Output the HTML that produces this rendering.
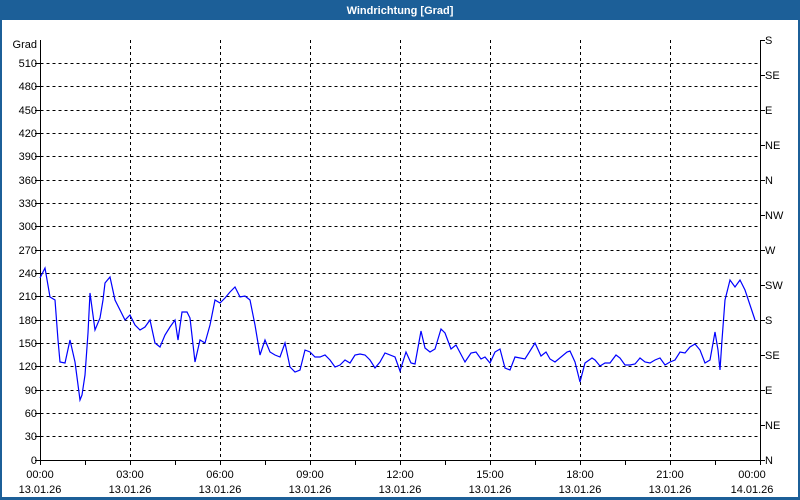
<!DOCTYPE html>
<html><head><meta charset="utf-8"><style>
html,body{margin:0;padding:0;width:800px;height:500px;overflow:hidden;background:#fff}
svg{display:block}
text{font-family:"Liberation Sans","DejaVu Sans",sans-serif;font-size:11px;fill:#000}
</style></head><body>
<svg width="800" height="500" xmlns="http://www.w3.org/2000/svg">
<rect x="0" y="0" width="800" height="500" fill="#1c5f98"/>
<rect x="2" y="20" width="796" height="477" fill="#fff"/>
<text x="400" y="14" text-anchor="middle" style="fill:#fff;font-weight:bold;font-size:11px">Windrichtung [Grad]</text>
<g stroke="#000" stroke-width="1" stroke-dasharray="3,3" fill="none">
<path d="M40.5 63.5H760M40.5 86.5H760M40.5 110.5H760M40.5 133.5H760M40.5 156.5H760M40.5 180.5H760M40.5 203.5H760M40.5 226.5H760M40.5 250.5H760M40.5 273.5H760M40.5 296.5H760M40.5 320.5H760M40.5 343.5H760M40.5 366.5H760M40.5 390.5H760M40.5 413.5H760M40.5 436.5H760"/>
<path d="M130.5 40V460M220.5 40V460M310.5 40V460M400.5 40V460M490.5 40V460M580.5 40V460M670.5 40V460"/>
</g>
<g stroke="#000" stroke-width="1" fill="none">
<path d="M40.5 40V460.5H760.5V40"/>
<path d="M35 63.5H40M35 86.5H40M35 110.5H40M35 133.5H40M35 156.5H40M35 180.5H40M35 203.5H40M35 226.5H40M35 250.5H40M35 273.5H40M35 296.5H40M35 320.5H40M35 343.5H40M35 366.5H40M35 390.5H40M35 413.5H40M35 436.5H40M35 460.5H40"/>
<path d="M760 40.5H765M760 75.5H765M760 110.5H765M760 145.5H765M760 180.5H765M760 215.5H765M760 250.5H765M760 285.5H765M760 320.5H765M760 355.5H765M760 390.5H765M760 425.5H765M760 460.5H765"/>
<path d="M40.5 460V465M85.5 460V465M130.5 460V465M175.5 460V465M220.5 460V465M265.5 460V465M310.5 460V465M355.5 460V465M400.5 460V465M445.5 460V465M490.5 460V465M535.5 460V465M580.5 460V465M625.5 460V465M670.5 460V465M715.5 460V465M760.5 460V465"/>
</g>
<g text-anchor="end">
<text x="37" y="48">Grad</text>
<text x="37" y="67">510</text><text x="37" y="90">480</text><text x="37" y="114">450</text><text x="37" y="137">420</text><text x="37" y="160">390</text><text x="37" y="184">360</text><text x="37" y="207">330</text><text x="37" y="230">300</text><text x="37" y="254">270</text><text x="37" y="277">240</text><text x="37" y="300">210</text><text x="37" y="324">180</text><text x="37" y="347">150</text><text x="37" y="370">120</text><text x="37" y="394">90</text><text x="37" y="417">60</text><text x="37" y="440">30</text><text x="37" y="464">0</text>
</g>
<g>
<text x="765" y="44">S</text><text x="765" y="79">SE</text><text x="765" y="114">E</text><text x="765" y="149">NE</text><text x="765" y="184">N</text><text x="765" y="219">NW</text><text x="765" y="254">W</text><text x="765" y="289">SW</text><text x="765" y="324">S</text><text x="765" y="359">SE</text><text x="765" y="394">E</text><text x="765" y="429">NE</text><text x="765" y="464">N</text>
</g>
<g text-anchor="middle">
<text x="40" y="478">00:00</text><text x="40" y="493">13.01.26</text>
<text x="130" y="478">03:00</text><text x="130" y="493">13.01.26</text>
<text x="220" y="478">06:00</text><text x="220" y="493">13.01.26</text>
<text x="310" y="478">09:00</text><text x="310" y="493">13.01.26</text>
<text x="400" y="478">12:00</text><text x="400" y="493">13.01.26</text>
<text x="490" y="478">15:00</text><text x="490" y="493">13.01.26</text>
<text x="580" y="478">18:00</text><text x="580" y="493">13.01.26</text>
<text x="670" y="478">21:00</text><text x="670" y="493">13.01.26</text>
<text x="752" y="478">00:00</text><text x="752" y="493">14.01.26</text>
</g>
<polyline fill="none" stroke="#0000ff" stroke-width="1.2" points="40,278 45,268 50,297 55,300 58,340 60,362 65,363 70,340 75,362 80,400 82,395 85,375 88,333 90,293 95,330 100,318 103,300 105,283 110,277 115,300 120,310 125,320 130,315 135,325 140,330 145,327 150,320 155,343 160,347 165,335 170,327 175,320 178,340 182,312 187,312 190,318 195,362 200,340 205,343 210,325 215,300 220,303 225,298 230,292 235,287 240,297 245,296 250,300 255,325 260,355 265,340 270,352 275,355 280,357 285,343 290,367 295,372 300,370 305,350 310,352 315,357 320,357 325,355 330,360 335,367 340,365 345,360 350,363 355,355 360,354 365,355 370,360 375,368 380,362 385,353 395,357 400,371 406,352 411,363 415,364 421,331 425,348 430,352 435,349 441,329 445,333 451,349 456,345 465,362 471,353 476,352 481,359 485,357 490,363 495,352 500,349 505,368 510,370 515,357 525,359 535,343 541,356 546,352 550,359 555,362 567,352 570,351 575,362 580,382 585,363 592,358 595,360 600,366 605,363 610,363 616,355 620,358 625,365 630,365 635,364 640,358 645,362 650,363 655,360 660,358 665,365 670,362 675,360 680,352 685,353 690,347 695,344 700,350 705,363 710,360 715,332 718,350 720,370 722,340 725,300 730,280 735,287 740,280 745,290 750,305 755,320"/>
</svg>
</body></html>
